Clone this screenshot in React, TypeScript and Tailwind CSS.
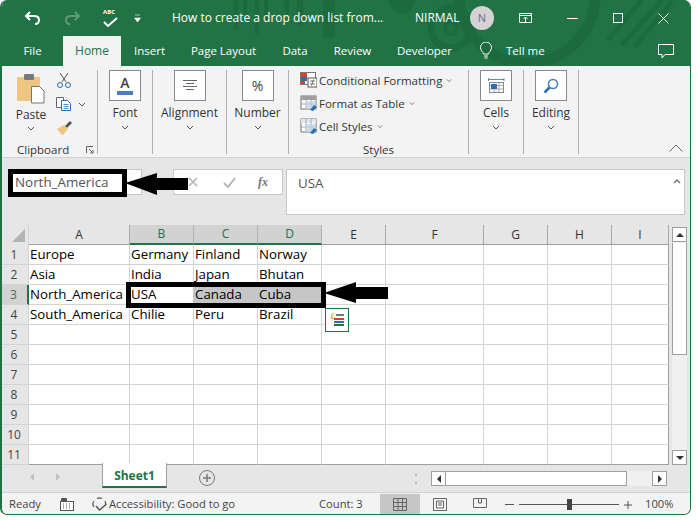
import React from "react";

const font = { fontFamily: '"Open Sans", "Noto Sans", sans-serif' };

function Chevron({ className = "" }: { className?: string }) {
  return (
    <svg width="8" height="5" viewBox="0 0 8 5" className={className}>
      <path d="M1 1l3 3 3-3" fill="none" stroke="#555" strokeWidth="1" />
    </svg>
  );
}

function RibbonButton({ label, width, children }: { label: string; width: string; children: React.ReactNode }) {
  return (
    <div className={`flex flex-col items-center border-r border-[#b1b1b1] h-[84px] ${width}`}>
      <div className="w-[32px] h-[31px] bg-white border border-[#8a8a8a] flex items-center justify-center">{children}</div>
      <div className="mt-[3px] text-[12px] leading-[18px] text-[#333]">{label}</div>
      <Chevron className="mt-[3px]" />
    </div>
  );
}

function StyleRow({ label, children }: { label: string; children: React.ReactNode }) {
  return (
    <div className="flex items-center h-[23px]">
      <div className="w-[19px] h-[17px]">{children}</div>
      <span className="text-[11.500px] text-[#333] whitespace-nowrap">{label}</span>
      <Chevron className="ml-[3px] scale-75" />
    </div>
  );
}

const cols = ["A", "B", "C", "D", "E", "F", "G", "H", "I"];
const data: string[][] = [
  ["Europe", "Germany", "Finland", "Norway"],
  ["Asia", "India", "Japan", "Bhutan"],
  ["North_America", "USA", "Canada", "Cuba"],
  ["South_America", "Chilie", "Peru", "Brazil"],
];

function TableIcon({ top }: { top: string }) {
  return (
    <svg width="19" height="17" viewBox="0 0 19 17">
      <rect x="1" y="1" width="15" height="13" fill="#fff" stroke="#777" />
      <rect x="1" y="1" width="15" height="4" fill={top} />
      <path d="M1 9h15M6 1v13M11 1v13" stroke="#999" strokeWidth="0.8" />
      <rect x="5" y="6" width="11" height="8" fill="#bcd0e6" opacity="0.7" />
      <path d="M10 15l4-5 3 2-4 4z" fill="#2f6fb0" />
    </svg>
  );
}

export default function App() {
  return (
    <div className="w-[697px] h-[520px] bg-white" style={font}>
      <div className="relative w-[691px] h-[515px] rounded-[7px] border-l-2 border-r border-b border-[#217346] overflow-hidden flex flex-col bg-[#e6e6e6]">
        {/* Header */}
        <div className="relative h-[66px] bg-[#217346] shrink-0">
          <svg className="absolute left-0 top-0" width="691" height="66" viewBox="0 0 691 66">
            <g fill="#1d6a3f">
              <rect x="232" y="0" width="4" height="30" />
              <rect x="241" y="0" width="4" height="22" />
              <rect x="253" y="0" width="4" height="34" />
              <rect x="262" y="0" width="4" height="20" />
              <path d="M281 0h6v22zM321 0h12v38h-12zM295 0h6v26h-6z" />
              <circle cx="400" cy="0" r="13" />
            </g>
            <g fill="none" stroke="#1d6a3f">
              <circle cx="449" cy="28" r="20" strokeWidth="7" />
              <circle cx="449" cy="28" r="6" strokeWidth="4" />
              <circle cx="525" cy="-5" r="68" strokeWidth="11" />
              <path d="M620 45l40-45M632 47l38-45M606 40l34-40" strokeWidth="5" />
            </g>
          </svg>

          {/* Title row */}
          <div className="relative flex items-center h-[36px] text-white pl-[21px]">
            <svg width="20" height="18" viewBox="0 0 20 18">
              <path d="M7 3L3 7l4 4M3 7h8c4 0 5 2 5 4s-1 4-4 4" fill="none" stroke="#fff" strokeWidth="2" />
            </svg>
            <Chevron className="ml-[4px] invert brightness-200" />
            <svg width="20" height="18" viewBox="0 0 20 18" className="ml-[7px]">
              <path d="M13 3l4 4-4 4M17 7H9c-4 0-5 2-5 4s1 4 4 4" fill="none" stroke="#5f9a7a" strokeWidth="2" />
            </svg>
            <Chevron className="ml-[2px] opacity-30" />
            <div className="relative ml-[11px] w-[17px] h-[22px]">
              <span className="absolute left-0 top-[2px] text-[6px] leading-[7px] font-bold">ABC</span>
              <svg className="absolute left-0 top-[10px]" width="15" height="10" viewBox="0 0 15 10">
                <path d="M1 5l4 4 9-8" fill="none" stroke="#fff" strokeWidth="2" />
              </svg>
            </div>
            <svg width="7" height="9" viewBox="0 0 7 9" className="ml-[14px]">
              <path d="M1 1h5M0.5 4h6L3.5 8z" fill="#fff" stroke="#fff" strokeWidth="0.6" />
            </svg>
            <span className="ml-[31px] w-[243px] text-[12px] whitespace-nowrap">How to create a drop down list from...</span>
            <span className="text-[12px] w-[55px]">NIRMAL</span>
            <div className="w-[24px] h-[24px] rounded-full bg-[#d3d3d3] text-[#6b6b8b] text-[11px] flex items-center justify-center">N</div>
            <svg width="14" height="11" viewBox="0 0 14 11" className="ml-[25px]">
              <path d="M.5.5h12v9H.5zM.5 2.500h12M4.500 6l2-2 2 2M6.500 4v5" fill="none" stroke="#fff" />
            </svg>
            <div className="ml-[34px] w-[11px] h-px bg-white" />
            <div className="ml-[35px] w-[10px] h-[10px] border border-white" />
            <svg width="11" height="11" viewBox="0 0 11 11" className="ml-[35px]">
              <path d="M.5.5l10 10M10.500.5l-10 10" stroke="#fff" />
            </svg>
          </div>

          {/* Tabs row */}
          <div className="relative flex items-stretch h-[30px] text-white text-[11.500px]">
            <div className="w-[61px] flex items-center justify-center">File</div>
            <div className="w-[58px] flex items-center justify-center bg-[#f3f3f3] text-[#217346] text-[12px]">Home</div>
            <div className="w-[57px] flex items-center justify-center">Insert</div>
            <div className="w-[91px] flex items-center justify-center">Page Layout</div>
            <div className="w-[52px] flex items-center justify-center">Data</div>
            <div className="w-[63px] flex items-center justify-center">Review</div>
            <div className="w-[81px] flex items-center justify-center">Developer</div>
            <div className="w-[40px] flex items-center justify-center pl-[2px]">
              <svg width="14" height="18" viewBox="0 0 14 18">
                <path d="M4.500 12c0-2-3-3-3-6.500a5.500 5.500 0 0 1 11 0C12.500 9 9.500 10 9.500 12zM5 14h4M5.500 16h3" fill="none" stroke="#fff" />
              </svg>
            </div>
            <div className="w-[153px] flex items-center pl-[1px]">Tell me</div>
            <svg width="17" height="15" viewBox="0 0 17 15" className="self-center">
              <path d="M.5.5h15v10H7L4 14v-3.500H.5z" fill="none" stroke="#fff" />
            </svg>
          </div>
        </div>

        {/* Ribbon */}
        <div className="relative h-[92px] shrink-0 bg-[#f3f3f3] border-b border-[#d2d2d2] flex pt-[4px] text-[#333]">
          {/* Clipboard */}
          <div className="w-[96px] h-[84px] border-r border-[#b1b1b1] relative flex flex-col">
            <div className="flex h-[66px]">
              <div className="w-[54px] flex flex-col items-center pt-[3px] pl-[4px]">
                <svg width="30" height="31" viewBox="0 0 30 31">
                  <rect x="1" y="4" width="23" height="24" rx="1" fill="#efc67f" />
                  <rect x="8" y="1" width="10" height="6" rx="1" fill="#7a7a7a" />
                  <path d="M15.500 13.500h8l4.500 4.500v12h-12.500z" fill="#fff" stroke="#777" />
                </svg>
                <span className="text-[12px] leading-[16px] mt-[3px]">Paste</span>
                <Chevron className="mt-[3px]" />
              </div>
              <div className="flex flex-col pt-[3px] gap-[9px]">
                <svg width="16" height="15" viewBox="0 0 16 15">
                  <path d="M4 0l6 9M12 0L6 9" stroke="#555" fill="none" />
                  <circle cx="4" cy="12" r="2.500" fill="none" stroke="#2f6fb0" />
                  <circle cx="12" cy="12" r="2.500" fill="none" stroke="#2f6fb0" />
                </svg>
                <div className="flex items-center">
                  <svg width="16" height="14" viewBox="0 0 16 14">
                    <path d="M.5.5h7v10h-7z" fill="#fff" stroke="#666" />
                    <path d="M5.500 3.500h6l3 3v7h-9z" fill="#fff" stroke="#2f6fb0" />
                    <path d="M7.500 7.500h5M7.500 9.500h5M7.500 11.500h5" stroke="#2f6fb0" strokeWidth="0.8" />
                  </svg>
                  <Chevron className="ml-[6px]" />
                </div>
                <svg width="17" height="15" viewBox="0 0 17 15">
                  <path d="M9 6l5-5 2 2-5 5z" fill="#555" />
                  <path d="M1 9l7-4 4 4-5 6-2-1z" fill="#efc67f" />
                </svg>
              </div>
            </div>
            <div className="absolute left-0 right-0 bottom-[-5px] flex items-center h-[18px] pl-[15px] text-[11.500px]">
              Clipboard
              <svg width="8" height="8" viewBox="0 0 8 8" className="ml-[17px]">
                <path d="M.5 7V.5H7M3 3l4 4M4 7h3V4" fill="none" stroke="#666" />
              </svg>
            </div>
          </div>

          <RibbonButton label="Font" width="w-[55px]">
            <div className="flex flex-col items-center">
              <span className="text-[14px] leading-[14px] text-[#444] font-semibold">A</span>
              <div className="w-[16px] h-[4px] bg-[#4a7ebb] mt-[1px]" />
            </div>
          </RibbonButton>
          <RibbonButton label="Alignment" width="w-[74px]">
            <svg width="14" height="11" viewBox="0 0 14 11">
              <path d="M0 .5h14M3 3.500h8M0 6.500h14M3 9.500h8" stroke="#666" />
            </svg>
          </RibbonButton>
          <RibbonButton label="Number" width="w-[62px]">
            <span className="text-[14px] text-[#444]">%</span>
          </RibbonButton>

          {/* Styles */}
          <div className="w-[180px] h-[84px] border-r border-[#b1b1b1] relative pl-[11px]">
            <div className="-mt-px">
              <StyleRow label="Conditional Formatting">
                <svg width="17" height="16" viewBox="0 0 17 16">
                  <rect x="0.500" y="0.500" width="15" height="12" fill="#fff" stroke="#777" />
                  <rect x="1" y="1" width="6" height="4" fill="#d24726" />
                  <rect x="1" y="5" width="6" height="4" fill="#2f6fb0" />
                  <rect x="1" y="9" width="4" height="3" fill="#d24726" />
                  <rect x="8" y="6" width="9" height="9" fill="#fff" stroke="#555" />
                  <path d="M10 9h5M10 12h5M13.500 7.500l-2 6" stroke="#555" strokeWidth="0.8" />
                </svg>
              </StyleRow>
              <StyleRow label="Format as Table">
                <TableIcon top="#9f9f9f" />
              </StyleRow>
              <StyleRow label="Cell Styles">
                <TableIcon top="#dfe7f0" />
              </StyleRow>
            </div>
            <div className="absolute left-0 right-0 bottom-[-5px] h-[18px] flex items-center justify-center text-[11.500px]">Styles</div>
          </div>

          <RibbonButton label="Cells" width="w-[55px]">
            <svg width="17" height="17" viewBox="0 0 17 17">
              <path d="M.5 1v3M16 1v3M1 2.500h15" stroke="#2f6fb0" strokeWidth="0.8" />
              <rect x="1.500" y="5.500" width="14" height="10" fill="#fff" stroke="#888" />
              <path d="M1.500 8.500h14M1.500 12h14M6 5.500v10M11 5.500v10" stroke="#999" strokeWidth="0.8" />
              <rect x="3" y="7" width="6" height="5" fill="#2f6fb0" />
            </svg>
          </RibbonButton>
          <RibbonButton label="Editing" width="w-[55px]">
            <svg width="16" height="16" viewBox="0 0 16 16">
              <circle cx="10" cy="6" r="4.500" fill="none" stroke="#4a7ebb" strokeWidth="1.600" />
              <path d="M6.500 9.500L1.500 14.500" stroke="#2f6fb0" strokeWidth="2.600" />
            </svg>
          </RibbonButton>

          <svg width="14" height="8" viewBox="0 0 14 8" className="absolute right-[7px] bottom-[5px]">
            <path d="M.5 7.500L7 1l6.500 6.500" fill="none" stroke="#666" />
          </svg>
        </div>

        {/* Formula bar */}
        <div className="h-[67px] shrink-0 flex items-start pt-[11px] pl-[6px] pr-[5px]">
          <div className="w-[134px] h-[26px] bg-white border border-[#c6c6c6] flex items-center pl-[6px] text-[13.400px] text-[#555]">North_America</div>
          <div className="ml-[31px] w-[110px] h-[26px] bg-white border border-[#c6c6c6] flex items-center">
            <svg width="10" height="10" viewBox="0 0 10 10" className="ml-[14px]">
              <path d="M1 1l8 8M9 1L1 9" stroke="#b5b5b5" strokeWidth="1.600" />
            </svg>
            <svg width="13" height="11" viewBox="0 0 13 11" className="ml-[25px]">
              <path d="M1 6l4 4 7-9" fill="none" stroke="#b5b5b5" strokeWidth="2" />
            </svg>
            <span className="ml-[22px] text-[12px] italic font-semibold text-[#777] leading-none" style={{ fontFamily: '"Liberation Serif", serif' }}>fx</span>
          </div>
          <div className="ml-[3px] flex-1 h-[46px] bg-white border border-[#c6c6c6] flex items-start justify-between pl-[11px] pr-[3px] pt-[3px] text-[13.400px] text-[#555]">
            <span>USA</span>
            <svg width="8" height="5" viewBox="0 0 8 5" className="mt-[6px]">
              <path d="M1 4l3-3 3 3" fill="none" stroke="#777" strokeWidth="1.500" />
            </svg>
          </div>
        </div>

        {/* Grid + scrollbar */}
        <div className="flex h-[240px] shrink-0">
          <div className="w-[667px] grid grid-cols-[27px_101px_64px_64px_64px_64px_98px_64px_64px_57px] grid-rows-[repeat(12,20px)] text-[13.300px] text-black bg-white">
            <div className="bg-[#e6e6e6] flex items-end justify-end border-r border-[#d4d4d4]">
              <svg width="13" height="13" viewBox="0 0 13 13" className="mr-[3px] mb-[3px]">
                <path d="M13 0v13H0z" fill="#b4b4b4" />
              </svg>
            </div>
            {cols.map((c, i) => {
              const sel = i >= 1 && i <= 3;
              return (
                <div
                  key={c}
                  className={`flex items-center justify-center text-[12px] border-r ${
                    sel ? "bg-[#d2d2d2] text-[#217346] border-b-2 border-b-[#217346] border-r-[#b0b0b0]" : "bg-[#e6e6e6] text-[#333] border-b border-b-[#9f9f9f] border-r-[#a8a8a8]"
                  }`}
                >
                  {c}
                </div>
              );
            })}
            {Array.from({ length: 11 }).map((_, r) => (
              <React.Fragment key={r}>
                <div className={`flex items-center justify-center pr-[2px] text-[12px] border-b border-[#d4d4d4] ${r === 2 ? "bg-[#d2d2d2] text-[#3f6f58] border-r-2 border-r-[#217346]" : "bg-[#e6e6e6] text-[#444] border-r"}`}>
                  {r + 1}
                </div>
                {cols.map((c, ci) => {
                  const t = data[r]?.[ci] ?? "";
                  const shaded = r === 2 && ci >= 1 && ci <= 3;
                  const shade = r === 2 && (ci === 2 || ci === 3);
                  return (
                    <div
                      key={c}
                      className={`flex items-center pl-[1px] pt-[1px] whitespace-nowrap overflow-hidden border-b border-r ${shaded ? "border-[#c6c6c6]" : "border-[#d4d4d4]"} ${shade ? "bg-[#c6c6c6]" : ""} ${ci === 8 ? "border-r-[#9f9f9f]" : ""} ${r === 10 ? "border-b-[#9f9f9f]" : ""}`}
                    >
                      {t}
                    </div>
                  );
                })}
              </React.Fragment>
            ))}
          </div>

          {/* Vertical scrollbar */}
          <div className="ml-[3px] mt-[2px] w-[15px] h-[238px] bg-[#f0f0f0] flex flex-col">
            <div className="h-[15px] bg-white border border-[#9f9f9f] flex items-center justify-center">
              <div className="w-0 h-0 border-x-[4px] border-x-transparent border-b-[4px] border-b-[#333]" />
            </div>
            <div className="h-[112px] bg-white border-x border-b border-[#9f9f9f] mt-px" />
            <div className="flex-1" />
            <div className="h-[15px] bg-white border border-[#9f9f9f] flex items-center justify-center">
              <div className="w-0 h-0 border-x-[4px] border-x-transparent border-t-[4px] border-t-[#333]" />
            </div>
          </div>
        </div>

        {/* Sheet tabs */}
        <div className="h-[28px] shrink-0 flex items-start relative -mt-px">
          <div className="w-[100px] flex items-center h-[25px] pl-[28px] gap-[22px]">
            <div className="w-0 h-0 border-y-[4px] border-y-transparent border-r-[4px] border-r-[#c0c0c0]" />
            <div className="w-0 h-0 border-y-[4px] border-y-transparent border-l-[4px] border-l-[#c0c0c0]" />
          </div>
          <div className="-mt-px w-[65px] h-[25px] pt-[2px] bg-white border-x border-[#9f9f9f] border-b-2 border-b-[#217346] flex items-center justify-center text-[12px] font-bold text-[#217346]">Sheet1</div>
          <div className="ml-[32px] mt-[6px] w-[16px] h-[16px] rounded-full border border-[#777] flex items-center justify-center">
            <svg width="8" height="8" viewBox="0 0 8 8"><path d="M4 0v8M0 4h8" stroke="#777" strokeWidth="1.500" /></svg>
          </div>
          <div className="ml-[200px] mt-[10px] h-[10px] w-[2px] border-y-2 border-[#bbb]" />
          <div className="ml-[14px] mt-[7px] w-[236px] h-[15px] bg-[#f0f0f0] flex">
            <div className="w-[15px] h-[15px] bg-white border border-[#9f9f9f] flex items-center justify-center">
              <div className="w-0 h-0 border-y-[4px] border-y-transparent border-r-[4px] border-r-[#333]" />
            </div>
            <div className="w-[181px] h-[15px] bg-white border-y border-r border-[#9f9f9f]" />
            <div className="flex-1" />
            <div className="w-[15px] h-[15px] bg-white border border-[#9f9f9f] flex items-center justify-center">
              <div className="w-0 h-0 border-y-[4px] border-y-transparent border-l-[4px] border-l-[#333]" />
            </div>
          </div>
        </div>

        {/* Status bar */}
        <div className="flex-1 bg-[#f3f3f3] border-t border-[#d2d2d2] flex items-center pt-[1px] text-[11.200px] text-[#444]">
          <span className="ml-[7px] w-[51px]">Ready</span>
          <svg width="14" height="13" viewBox="0 0 14 13">
            <rect x="0.500" y="3.500" width="13" height="9" fill="#fff" stroke="#555" />
            <rect x="1" y="0" width="6" height="4" rx="1" fill="#555" />
            <path d="M3 6h1M6 6h1M9 6h1M3 8h1M6 8h1M9 8h1M3 10h1M6 10h1M9 10h1" stroke="#555" />
          </svg>
          <svg width="17" height="15" viewBox="0 0 17 15" className="ml-[17px]">
            <path d="M3 10a5 5 0 0 1 0-6M6 1.500a5 5 0 0 1 5 0M14 4a5 5 0 0 1 .5 3" fill="none" stroke="#555" strokeWidth="1.200" />
            <path d="M5 9l3.500 4 7-6" fill="none" stroke="#555" strokeWidth="1.500" />
          </svg>
          <span className="ml-[1px] w-[210px] whitespace-nowrap">Accessibility: Good to go</span>
          <span className="w-[61px] whitespace-nowrap">Count: 3</span>
          <div className="w-[40px] h-[21px] bg-[#c6c6c6] flex items-center justify-center">
            <svg width="14" height="13" viewBox="0 0 14 13">
              <path d="M.5.5h13v12H.5zM5 .5v12M9.500.5v12M.5 4.500h13M.5 8.500h13" fill="none" stroke="#666" />
            </svg>
          </div>
          <svg width="14" height="13" viewBox="0 0 14 13" className="ml-[13px]">
            <path d="M.5.5h13v12H.5z" fill="none" stroke="#666" />
            <path d="M3.500 3h7v7h-7zM5 5h4M5 7h4" fill="none" stroke="#666" />
          </svg>
          <svg width="14" height="13" viewBox="0 0 14 13" className="ml-[26px]">
            <path d="M.5.5h13v9H.5zM5.500.5v4.500h3V.5" fill="none" stroke="#666" />
          </svg>
          <div className="ml-[18px] w-[9px] h-px bg-[#555]" />
          <div className="ml-[5px] w-[100px] h-px bg-[#555] relative">
            <div className="absolute left-[48px] -top-[5px] w-[5px] h-[11px] bg-[#444]" />
          </div>
          <svg width="8" height="8" viewBox="0 0 8 8" className="ml-[5px]">
            <path d="M4 0v8M0 4h8" stroke="#555" />
          </svg>
          <span className="ml-[13px]">100%</span>
        </div>

        {/* Overlays: drawn annotations */}
        <div className="absolute left-[5.500px] top-[169px] w-[119px] h-[28px] border-[5px] border-black" />
        <svg className="absolute left-[123px] top-[172px]" width="66" height="24" viewBox="0 0 66 24">
          <path d="M0 11L32 1v5h31v12H32v5z" fill="#000" />
        </svg>
        <div className="absolute left-[124px] top-[282px] w-[200px] h-[26px] border-[5px] border-black" />
        <svg className="absolute left-[322px] top-[281px]" width="66" height="26" viewBox="0 0 66 26">
          <path d="M0 12L32 1v5h32v12H32v4z" fill="#000" />
        </svg>
        {/* Quick analysis tag */}
        <div className="absolute left-[323px] top-[308px] w-[24px] h-[24px] bg-white border border-[#217346] flex items-center justify-center">
          <svg width="16" height="16" viewBox="0 0 16 16">
            <path d="M3 1L1 7h2l-1 4 4-6H4l1-4z" fill="#efc67f" />
            <path d="M7 3h8" stroke="#777" strokeWidth="2" />
            <path d="M5 7h10" stroke="#d24726" strokeWidth="2" />
            <path d="M5 10h10" stroke="#2f6fb0" strokeWidth="2" />
            <path d="M5 13h10" stroke="#217346" strokeWidth="2" />
          </svg>
        </div>
      </div>
    </div>
  );
}
